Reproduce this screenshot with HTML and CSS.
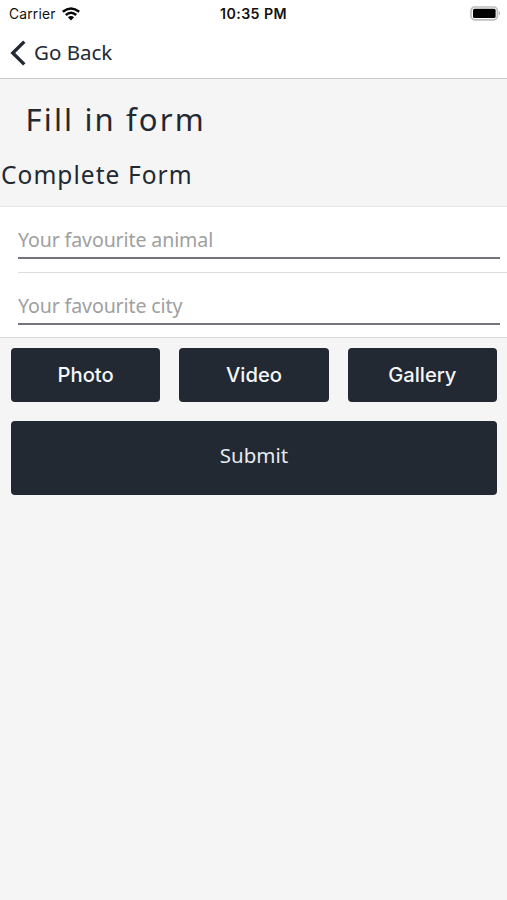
FILE: index.html
```html
<!DOCTYPE html>
<html lang="en">
<head>
<meta charset="utf-8">
<title>Fill in form</title>
<link rel="stylesheet" href="styles.css">
</head>
<body>
<header class="top">
  <div class="status">
    <div class="carrier"><span class="carrier-name">Carrier</span>
      <svg class="wifi" width="18" height="14" viewBox="0 0 18 14" fill="none" stroke="#050505" stroke-width="2.5"><path d="M.8 4.8Q9-1.8 17.2 4.8M3.8 8Q9 3.5 14.2 8"/><path d="M9 13.5 5.9 10.3Q9 7.9 12.1 10.3Z" fill="#050505" stroke="none"/></svg>
    </div>
    <time class="clock">10:35 PM</time>
    <svg class="battery" width="31" height="15" viewBox="0 0 31 15"><rect x="1" y="1" width="26.4" height="12.8" rx="3.8" fill="#fff" stroke="#bdbdbd" stroke-width="1.7"/><rect x="3" y="2.8" width="22.6" height="9.2" rx="1.5" fill="#000"/><path d="M28.9 5Q31 7.2 28.9 9.6Z" fill="#aaa"/></svg>
  </div>
  <nav class="nav">
    <svg class="chevron" width="16" height="26" viewBox="0 0 16 26" fill="none" stroke="#222933" stroke-width="3.4"><path d="M14.3 1.6 2.8 13l11.5 11.4"/></svg>
    <a class="back">Go Back</a>
  </nav>
</header>
<main>
  <h1 class="title">Fill in form</h1>
  <h2 class="subtitle">Complete Form</h2>
  <form>
    <div class="fields">
      <div class="field"><input class="input" type="text" placeholder="Your favourite animal"></div>
      <div class="field"><input class="input" type="text" placeholder="Your favourite city"></div>
    </div>
    <div class="actions">
      <button class="button" type="button">Photo</button>
      <button class="button" type="button">Video</button>
      <button class="button" type="button">Gallery</button>
      <button class="button submit" type="button">Submit</button>
    </div>
  </form>
</main>
</body>
</html>
```
FILE: styles.css
```css
* { box-sizing: border-box; }
body {
  margin: 0;
  min-height: 900px;
  background: #f5f5f5;
  color: #222933;
  font-family: "Noto Sans", sans-serif;
}
.top {
  height: 79px;
  background: #fff;
  border-bottom: 1px solid #c6c6c6;
}
.status {
  display: grid;
  grid-template-columns: 1fr auto 1fr;
  align-items: center;
  height: 27px;
  padding: 0 6px;
  font-family: Inter, sans-serif;
  color: #111;
}
.carrier { display: flex; align-items: center; gap: 6px; padding-left: 3px; }
.carrier-name { font-size: 13.8px; letter-spacing: .2px; }
.clock { font-size: 14.2px; font-weight: 600; letter-spacing: .4px; }
.battery { justify-self: end; }
.nav { display: flex; align-items: center; height: 51px; padding-left: 10px; gap: 8px; }
.back { padding-bottom: 2px; font-size: 20.5px; line-height: 28px; }
.title {
  margin: 0;
  padding: 19px 0 0 25.5px;
  font-size: 31px;
  line-height: 42px;
  font-weight: 400;
  letter-spacing: 2.15px;
}
.subtitle {
  margin: 0;
  padding: 17px 0 14px 1px;
  font-size: 24.5px;
  line-height: 35px;
  font-weight: 400;
  letter-spacing: 1.05px;
}
.fields {
  height: 132px;
  padding-left: 18px;
  background: #fff;
  border-top: 1px solid #e5e5e5;
  border-bottom: 1px solid #d8d8d8;
}
.field { height: 66px; padding: 14px 7px 0 0; }
.field:first-child { border-bottom: 1px solid #dedede; }
.input {
  display: block;
  width: 100%;
  height: 38px;
  padding: 1px 0 0;
  border: 0;
  border-bottom: 2px solid #74757a;
  background: transparent;
  color: #222933;
  font: 19.6px/34px "Noto Sans", sans-serif;
  letter-spacing: -.13px;
  outline: none;
}
.input::placeholder { color: #a0a0a0; opacity: 1; }
.actions {
  display: grid;
  grid-template-columns: repeat(3, 1fr);
  column-gap: 19px;
  row-gap: 19.5px;
  padding: 10px 10px 0 11px;
}
.button {
  height: 53.5px;
  padding: 0;
  border: 0;
  border-radius: 4px;
  background: #222933;
  color: #f5f7fa;
  font: 500 20.2px/26px Inter, sans-serif;
}
.submit {
  grid-column: 1 / -1;
  height: 73.5px;
  padding-bottom: 6px;
  font: 400 20.5px/28px "Noto Sans", sans-serif;
  color: #e6ebf0;
}
```
